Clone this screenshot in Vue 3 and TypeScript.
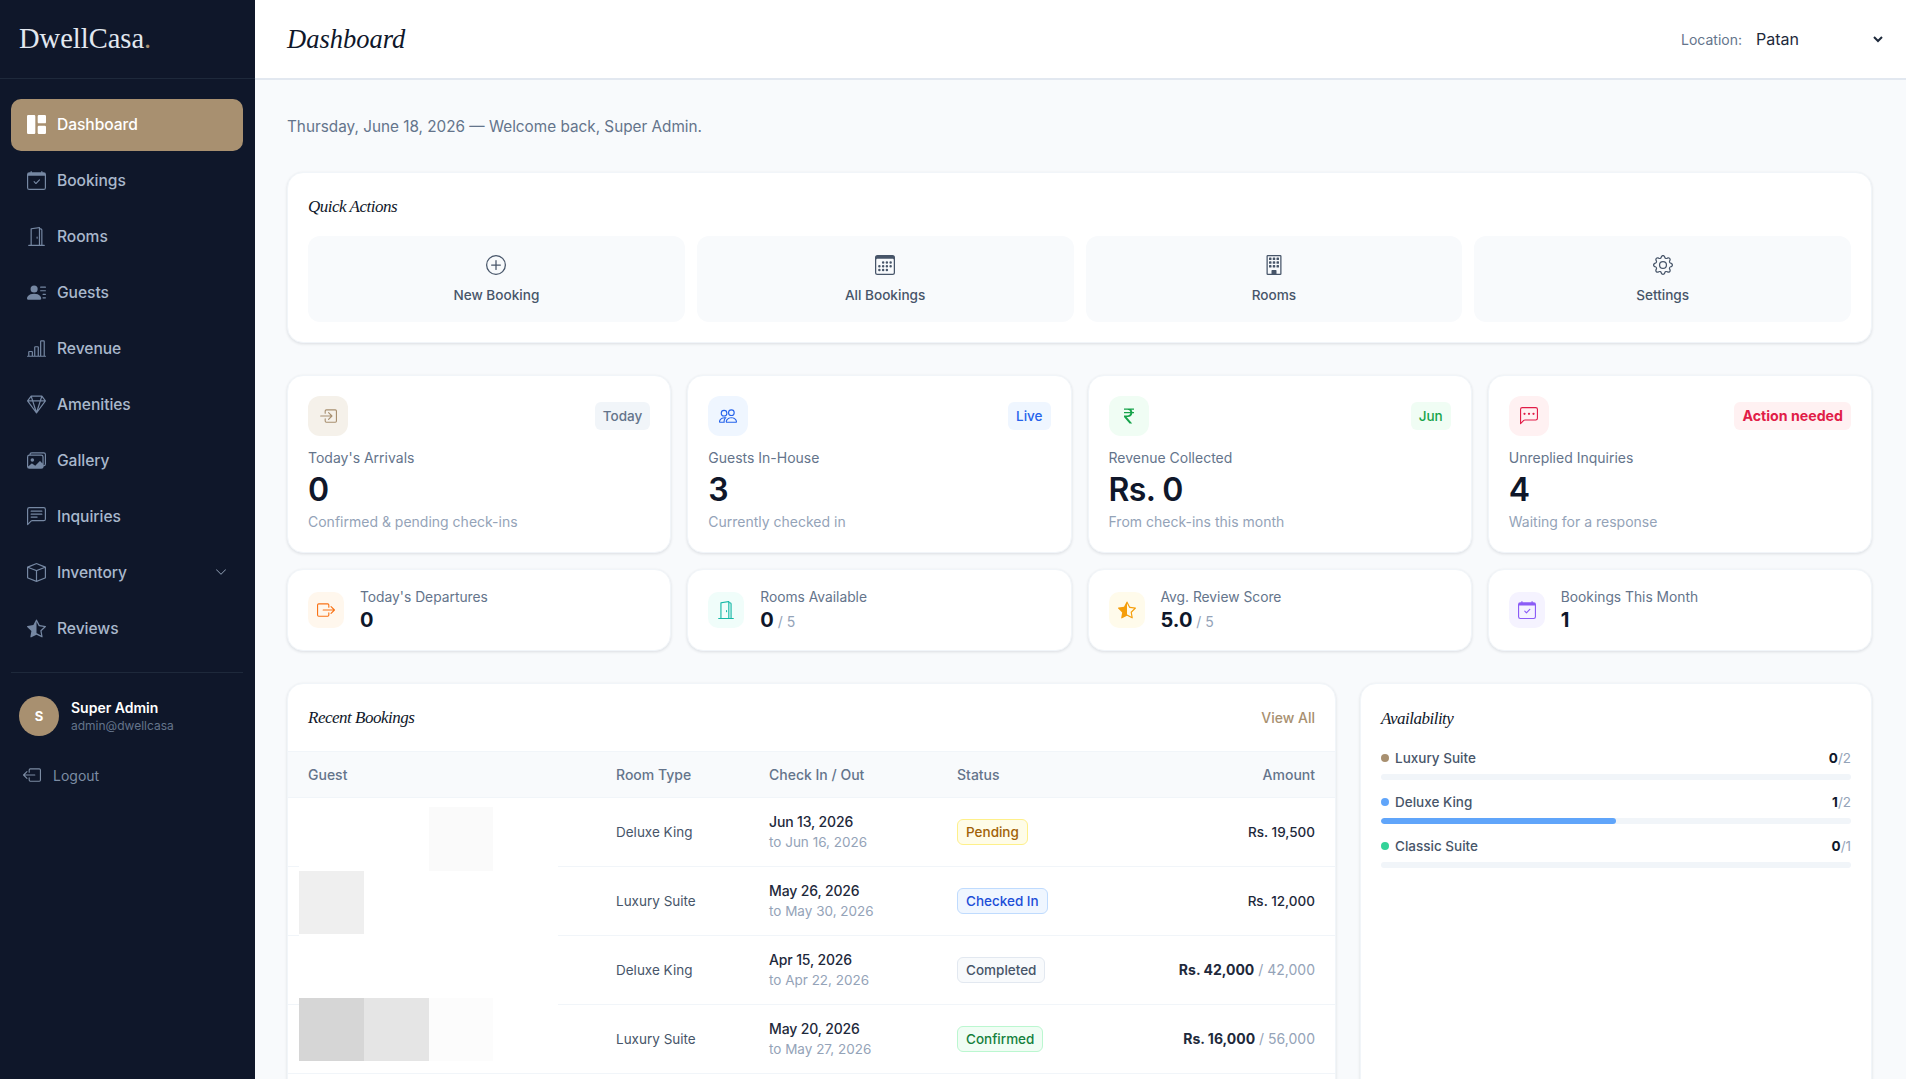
<template>
  <div class="layout">
    <aside class="sidebar">
      <div class="brand">DwellCasa<span class="brand-dot">.</span></div>
      <nav class="nav">
        <a v-for="item in navItems" :key="item.label" :class="['nav-item', { active: item.label === 'Dashboard' }]">
          <Icon :name="item.icon" class="nav-icon" />
          <span>{{ item.label }}</span>
          <Icon v-if="item.hasMenu" name="chevronDown" class="nav-caret" />
        </a>
      </nav>
      <div class="user-block">
        <div class="user">
          <div class="avatar">S</div>
          <div>
            <div class="user-name">Super Admin</div>
            <div class="user-mail">admin@dwellcasa</div>
          </div>
        </div>
        <a class="logout">
          <Icon name="boxArrowLeft" class="logout-icon" />
          <span>Logout</span>
        </a>
      </div>
    </aside>

    <div class="main">
      <header class="topbar">
        <h1 class="page-title">Dashboard</h1>
        <div class="location">
          <label class="location-label" for="location">Location:</label>
          <select id="location" class="location-select">
            <option>Patan</option>
          </select>
        </div>
      </header>

      <main class="content">
        <p class="welcome">Thursday, June 18, 2026 — Welcome back, Super Admin.</p>

        <section class="card quick">
          <h2 class="card-title">Quick Actions</h2>
          <div class="quick-grid">
            <a v-for="action in quickActions" :key="action.label" class="quick-btn">
              <Icon :name="action.icon" class="quick-icon" />
              <span>{{ action.label }}</span>
            </a>
          </div>
        </section>

        <section class="stat-grid">
          <div v-for="stat in mainStats" :key="stat.label" class="card stat">
            <div class="stat-top">
              <div :class="['stat-icon', `tone-${stat.tone}`]"><Icon :name="stat.icon" /></div>
              <span :class="['stat-badge', `tone-${stat.badgeTone}`]">{{ stat.badge }}</span>
            </div>
            <div class="stat-label">{{ stat.label }}</div>
            <div class="stat-value">{{ stat.value }}</div>
            <div class="stat-hint">{{ stat.hint }}</div>
          </div>
        </section>

        <section class="stat-grid mini-grid">
          <div v-for="stat in miniStats" :key="stat.label" class="card mini">
            <div :class="['mini-icon', `tone-${stat.tone}`]"><Icon :name="stat.icon" /></div>
            <div>
              <div class="mini-label">{{ stat.label }}</div>
              <div class="mini-value">{{ stat.value }}<small v-if="stat.total"> / {{ stat.total }}</small></div>
            </div>
          </div>
        </section>

        <section class="bottom">
          <div class="card bookings">
            <div class="bookings-head">
              <h2 class="card-title flat">Recent Bookings</h2>
              <a class="view-all">View All</a>
            </div>
            <div class="table-wrap">
              <table class="table">
                <thead>
                  <tr>
                    <th>Guest</th>
                    <th>Room Type</th>
                    <th>Check In / Out</th>
                    <th>Status</th>
                    <th class="right">Amount</th>
                  </tr>
                </thead>
                <tbody>
                  <tr v-for="row in bookings" :key="row.checkIn">
                    <td></td>
                    <td class="room">{{ row.room }}</td>
                    <td>
                      <div class="date-in">{{ row.checkIn }}</div>
                      <div class="date-out">to {{ row.checkOut }}</div>
                    </td>
                    <td><span :class="['status', `status-${row.status.toLowerCase().replace(' ', '-')}`]">{{ row.status }}</span></td>
                    <td class="right amount">
                      <span :class="{ strong: row.total }">{{ row.amount }}</span>
                      <span v-if="row.total" class="amount-total"> / {{ row.total }}</span>
                    </td>
                  </tr>
                  <!-- next row is below the fold -->
                  <tr><td colspan="5"></td></tr>
                </tbody>
              </table>
              <!-- pixelated block over the guest names -->
              <div class="mosaic">
                <span v-for="(shade, i) in mosaic" :key="i" class="mosaic-cell" :style="{ background: shade }"></span>
              </div>
            </div>
          </div>

          <div class="card availability">
            <h2 class="card-title">Availability</h2>
            <div v-for="room in availability" :key="room.name" class="avail-row">
              <div class="avail-line">
                <span class="avail-dot" :style="{ background: room.color }"></span>
                <span class="avail-name">{{ room.name }}</span>
                <span class="avail-count"><b>{{ room.free }}</b>/{{ room.total }}</span>
              </div>
              <div class="avail-track">
                <div class="avail-fill" :style="{ width: (room.free / room.total) * 100 + '%', background: room.color }"></div>
              </div>
            </div>
          </div>
        </section>
      </main>
    </div>
  </div>
</template>

<script setup lang="ts">
import { h } from 'vue';

const iconPaths: Record<string, string[]> = {
  grid: ['M0 1a1 1 0 0 1 1-1h5a1 1 0 0 1 1 1v14a1 1 0 0 1-1 1H1a1 1 0 0 1-1-1V1zm9 0a1 1 0 0 1 1-1h5a1 1 0 0 1 1 1v5a1 1 0 0 1-1 1h-5a1 1 0 0 1-1-1V1zm0 9a1 1 0 0 1 1-1h5a1 1 0 0 1 1 1v5a1 1 0 0 1-1 1h-5a1 1 0 0 1-1-1v-5z'],
  calendarCheck: [
    'M10.854 7.146a.5.5 0 0 1 0 .708l-3 3a.5.5 0 0 1-.708 0l-1.5-1.5a.5.5 0 1 1 .708-.708L7.5 9.793l2.646-2.647a.5.5 0 0 1 .708 0z',
    'M3.5 0a.5.5 0 0 1 .5.5V1h8V.5a.5.5 0 0 1 1 0V1h1a2 2 0 0 1 2 2v11a2 2 0 0 1-2 2H2a2 2 0 0 1-2-2V3a2 2 0 0 1 2-2h1V.5a.5.5 0 0 1 .5-.5zM1 4v10a1 1 0 0 0 1 1h12a1 1 0 0 0 1-1V4H1z'
  ],
  doorOpen: [
    'M8.5 10c-.276 0-.5-.448-.5-1s.224-1 .5-1 .5.448.5 1-.224 1-.5 1z',
    'M10.828.122A.5.5 0 0 1 11 .5V1h.5A1.5 1.5 0 0 1 13 2.5V15h1.5a.5.5 0 0 1 0 1h-13a.5.5 0 0 1 0-1H3V1.5a.5.5 0 0 1 .43-.495l7-1a.5.5 0 0 1 .398.117zM11.5 2H11v13h1V2.5a.5.5 0 0 0-.5-.5zM4 1.934V15h6V1.077l-6 .857z'
  ],
  personLines: ['M6 8a3 3 0 1 0 0-6 3 3 0 0 0 0 6zm-5 6s-1 0-1-1 1-4 6-4 6 3 6 4-1 1-1 1H1zM11 3.5a.5.5 0 0 1 .5-.5h4a.5.5 0 0 1 0 1h-4a.5.5 0 0 1-.5-.5zm.5 2.5a.5.5 0 0 0 0 1h4a.5.5 0 0 0 0-1h-4zm2 3a.5.5 0 0 0 0 1h2a.5.5 0 0 0 0-1h-2zm0 3a.5.5 0 0 0 0 1h2a.5.5 0 0 0 0-1h-2z'],
  barChart: ['M11 2a1 1 0 0 1 1-1h2a1 1 0 0 1 1 1v12h.5a.5.5 0 0 1 0 1H.5a.5.5 0 0 1 0-1H1v-3a1 1 0 0 1 1-1h2a1 1 0 0 1 1 1v3h1V7a1 1 0 0 1 1-1h2a1 1 0 0 1 1 1v7h1V2zm1 12h2V2h-2v12zm-3 0V7H7v7h2zm-5 0v-3H2v3h2z'],
  gem: ['M3.1.7a.5.5 0 0 1 .4-.2h9a.5.5 0 0 1 .4.2l2.976 3.974c.149.185.156.45.01.644L8.4 15.3a.5.5 0 0 1-.8 0L.1 5.3a.5.5 0 0 1 0-.6l3-4zm11.386 3.785-1.806-2.41-.776 2.413 2.582-.003zm-3.633.004.961-2.989H4.186l.963 2.995 5.704-.006zM5.47 5.495 8 13.366l2.532-7.876-5.062.005zm-1.371-.999-.78-2.422-1.818 2.425 2.598-.003zM1.499 5.5l5.113 6.817-2.192-6.82L1.5 5.5zm7.889 6.817 5.123-6.83-2.928.002-2.195 6.828z'],
  images: [
    'M4.502 9a1.5 1.5 0 1 0 0-3 1.5 1.5 0 0 0 0 3z',
    'M14.002 13a2 2 0 0 1-2 2h-10a2 2 0 0 1-2-2V5A2 2 0 0 1 2 3a2 2 0 0 1 2-2h10a2 2 0 0 1 2 2v8a2 2 0 0 1-1.998 2zM14 2H4a1 1 0 0 0-1 1h9.002a2 2 0 0 1 2 2v7A1 1 0 0 0 15 11V3a1 1 0 0 0-1-1zM2.002 4a1 1 0 0 0-1 1v8l2.646-2.354a.5.5 0 0 1 .63-.062l2.66 1.773 3.71-3.71a.5.5 0 0 1 .577-.094l1.777 1.947V5a1 1 0 0 0-1-1h-10z'
  ],
  chatText: [
    'M14 1a1 1 0 0 1 1 1v8a1 1 0 0 1-1 1H4.414A2 2 0 0 0 3 11.586l-2 2V2a1 1 0 0 1 1-1h12zM2 0a2 2 0 0 0-2 2v12.793a.5.5 0 0 0 .854.353l2.853-2.853A1 1 0 0 1 4.414 12H14a2 2 0 0 0 2-2V2a2 2 0 0 0-2-2H2z',
    'M3 3.5a.5.5 0 0 1 .5-.5h9a.5.5 0 0 1 0 1h-9a.5.5 0 0 1-.5-.5zM3 6a.5.5 0 0 1 .5-.5h9a.5.5 0 0 1 0 1h-9A.5.5 0 0 1 3 6zm0 2.5a.5.5 0 0 1 .5-.5h5a.5.5 0 0 1 0 1h-5a.5.5 0 0 1-.5-.5z'
  ],
  box: ['M8.186 1.113a.5.5 0 0 0-.372 0L1.846 3.5 8 5.961 14.154 3.5 8.186 1.113zM15 4.239l-6.5 2.6v7.922l6.5-2.6V4.24zM7.5 14.762V6.838L1 4.239v7.925l6.5 2.6zM7.443.184a1.5 1.5 0 0 1 1.114 0l7.129 2.852A.5.5 0 0 1 16 3.5v8.662a1 1 0 0 1-.629.928l-7.185 2.874a.5.5 0 0 1-.372 0L.63 13.09a1 1 0 0 1-.63-.928V3.5a.5.5 0 0 1 .314-.464L7.443.184z'],
  starHalf: ['M5.354 5.119 7.538.792A.516.516 0 0 1 8 .5c.183 0 .366.097.465.292l2.184 4.327 4.898.696A.537.537 0 0 1 16 6.32a.548.548 0 0 1-.17.445l-3.523 3.356.83 4.73c.078.443-.36.79-.746.592L8 13.187l-4.389 2.256a.52.52 0 0 1-.146.05c-.342.06-.668-.254-.6-.642l.83-4.73L.173 6.765a.55.55 0 0 1-.172-.403.58.58 0 0 1 .085-.302.513.513 0 0 1 .37-.245l4.898-.696zM8 12.027a.5.5 0 0 1 .232.056l3.686 1.894-.694-3.957a.565.565 0 0 1 .162-.505l2.907-2.77-4.052-.576a.525.525 0 0 1-.393-.288L8.001 2.223 8 2.226v9.8z'],
  chevronDown: ['M1.646 4.646a.5.5 0 0 1 .708 0L8 10.293l5.646-5.647a.5.5 0 0 1 .708.708l-6 6a.5.5 0 0 1-.708 0l-6-6a.5.5 0 0 1 0-.708z'],
  boxArrowLeft: [
    'M6 12.5a.5.5 0 0 0 .5.5h8a.5.5 0 0 0 .5-.5v-9a.5.5 0 0 0-.5-.5h-8a.5.5 0 0 0-.5.5v2a.5.5 0 0 1-1 0v-2A1.5 1.5 0 0 1 6.5 2h8A1.5 1.5 0 0 1 16 3.5v9a1.5 1.5 0 0 1-1.5 1.5h-8A1.5 1.5 0 0 1 5 12.5v-2a.5.5 0 0 1 1 0v2z',
    'M.146 8.354a.5.5 0 0 1 0-.708l3-3a.5.5 0 1 1 .708.708L1.707 7.5H10.5a.5.5 0 0 1 0 1H1.707l2.147 2.146a.5.5 0 0 1-.708.708l-3-3z'
  ],
  plusCircle: [
    'M8 15A7 7 0 1 1 8 1a7 7 0 0 1 0 14zm0 1A8 8 0 1 0 8 0a8 8 0 0 0 0 16z',
    'M8 4a.5.5 0 0 1 .5.5v3h3a.5.5 0 0 1 0 1h-3v3a.5.5 0 0 1-1 0v-3h-3a.5.5 0 0 1 0-1h3v-3A.5.5 0 0 1 8 4z'
  ],
  calendar3: [
    'M14 0H2a2 2 0 0 0-2 2v12a2 2 0 0 0 2 2h12a2 2 0 0 0 2-2V2a2 2 0 0 0-2-2zM1 3.857C1 3.384 1.448 3 2 3h12c.552 0 1 .384 1 .857v10.286c0 .473-.448.857-1 .857H2c-.552 0-1-.384-1-.857V3.857z',
    'M6.5 7a1 1 0 1 0 0-2 1 1 0 0 0 0 2zm3 0a1 1 0 1 0 0-2 1 1 0 0 0 0 2zm3 0a1 1 0 1 0 0-2 1 1 0 0 0 0 2zm-9 3a1 1 0 1 0 0-2 1 1 0 0 0 0 2zm3 0a1 1 0 1 0 0-2 1 1 0 0 0 0 2zm3 0a1 1 0 1 0 0-2 1 1 0 0 0 0 2zm3 0a1 1 0 1 0 0-2 1 1 0 0 0 0 2zm-9 3a1 1 0 1 0 0-2 1 1 0 0 0 0 2zm3 0a1 1 0 1 0 0-2 1 1 0 0 0 0 2zm3 0a1 1 0 1 0 0-2 1 1 0 0 0 0 2z'
  ],
  building: [
    'M4 2.5a.5.5 0 0 1 .5-.5h1a.5.5 0 0 1 .5.5v1a.5.5 0 0 1-.5.5h-1a.5.5 0 0 1-.5-.5v-1Zm3 0a.5.5 0 0 1 .5-.5h1a.5.5 0 0 1 .5.5v1a.5.5 0 0 1-.5.5h-1a.5.5 0 0 1-.5-.5v-1Zm3.5-.5a.5.5 0 0 0-.5.5v1a.5.5 0 0 0 .5.5h1a.5.5 0 0 0 .5-.5v-1a.5.5 0 0 0-.5-.5h-1ZM4 5.5a.5.5 0 0 1 .5-.5h1a.5.5 0 0 1 .5.5v1a.5.5 0 0 1-.5.5h-1a.5.5 0 0 1-.5-.5v-1ZM7.5 5a.5.5 0 0 0-.5.5v1a.5.5 0 0 0 .5.5h1a.5.5 0 0 0 .5-.5v-1a.5.5 0 0 0-.5-.5h-1Zm2.5.5a.5.5 0 0 1 .5-.5h1a.5.5 0 0 1 .5.5v1a.5.5 0 0 1-.5.5h-1a.5.5 0 0 1-.5-.5v-1ZM4.5 8a.5.5 0 0 0-.5.5v1a.5.5 0 0 0 .5.5h1a.5.5 0 0 0 .5-.5v-1a.5.5 0 0 0-.5-.5h-1Zm2.5.5a.5.5 0 0 1 .5-.5h1a.5.5 0 0 1 .5.5v1a.5.5 0 0 1-.5.5h-1a.5.5 0 0 1-.5-.5v-1Zm3.5-.5a.5.5 0 0 0-.5.5v1a.5.5 0 0 0 .5.5h1a.5.5 0 0 0 .5-.5v-1a.5.5 0 0 0-.5-.5h-1Z',
    'M2 1a1 1 0 0 1 1-1h10a1 1 0 0 1 1 1v14a1 1 0 0 1-1 1H3a1 1 0 0 1-1-1V1Zm11 0H3v14h3v-2.5a.5.5 0 0 1 .5-.5h3a.5.5 0 0 1 .5.5V15h3V1Z'
  ],
  gear: [
    'M8 4.754a3.246 3.246 0 1 0 0 6.492 3.246 3.246 0 0 0 0-6.492zM5.754 8a2.246 2.246 0 1 1 4.492 0 2.246 2.246 0 0 1-4.492 0z',
    'M9.796 1.343c-.527-1.79-3.065-1.79-3.592 0l-.094.319a.873.873 0 0 1-1.255.52l-.292-.16c-1.64-.892-3.433.902-2.54 2.541l.159.292a.873.873 0 0 1-.52 1.255l-.319.094c-1.79.527-1.79 3.065 0 3.592l.319.094a.873.873 0 0 1 .52 1.255l-.16.292c-.892 1.64.901 3.434 2.541 2.54l.292-.159a.873.873 0 0 1 1.255.52l.094.319c.527 1.79 3.065 1.79 3.592 0l.094-.319a.873.873 0 0 1 1.255-.52l.292.16c1.64.893 3.434-.902 2.54-2.541l-.159-.292a.873.873 0 0 1 .52-1.255l.319-.094c1.79-.527 1.79-3.065 0-3.592l-.319-.094a.873.873 0 0 1-.52-1.255l.16-.292c.893-1.64-.902-3.433-2.541-2.54l-.292.159a.873.873 0 0 1-1.255-.52l-.094-.319zm-2.633.283c.246-.835 1.428-.835 1.674 0l.094.319a1.873 1.873 0 0 0 2.693 1.115l.291-.16c.764-.415 1.6.42 1.184 1.185l-.159.292a1.873 1.873 0 0 0 1.116 2.692l.318.094c.835.246.835 1.428 0 1.674l-.319.094a1.873 1.873 0 0 0-1.115 2.693l.16.291c.415.764-.42 1.6-1.185 1.184l-.291-.159a1.873 1.873 0 0 0-2.693 1.116l-.094.318c-.246.835-1.428.835-1.674 0l-.094-.319a1.873 1.873 0 0 0-2.692-1.115l-.292.16c-.764.415-1.6-.42-1.184-1.185l.159-.291A1.873 1.873 0 0 0 1.945 8.93l-.319-.094c-.835-.246-.835-1.428 0-1.674l.319-.094A1.873 1.873 0 0 0 3.06 4.377l-.16-.292c-.415-.764.42-1.6 1.185-1.184l.292.159a1.873 1.873 0 0 0 2.692-1.115l.094-.319z'
  ],
  boxArrowIn: [
    'M6 3.5a.5.5 0 0 1 .5-.5h8a.5.5 0 0 1 .5.5v9a.5.5 0 0 1-.5.5h-8a.5.5 0 0 1-.5-.5v-2a.5.5 0 0 0-1 0v2A1.5 1.5 0 0 0 6.5 14h8a1.5 1.5 0 0 0 1.5-1.5v-9A1.5 1.5 0 0 0 14.5 2h-8A1.5 1.5 0 0 0 5 3.5v2a.5.5 0 0 0 1 0v-2z',
    'M11.854 8.354a.5.5 0 0 0 0-.708l-3-3a.5.5 0 1 0-.708.708L10.293 7.5H1.5a.5.5 0 0 0 0 1h8.793l-2.147 2.146a.5.5 0 0 0 .708.708l3-3z'
  ],
  boxArrowRight: [
    'M10 12.5a.5.5 0 0 1-.5.5h-8a.5.5 0 0 1-.5-.5v-9a.5.5 0 0 1 .5-.5h8a.5.5 0 0 1 .5.5v2a.5.5 0 0 0 1 0v-2A1.5 1.5 0 0 0 9.5 2h-8A1.5 1.5 0 0 0 0 3.5v9A1.5 1.5 0 0 0 1.5 14h8a1.5 1.5 0 0 0 1.5-1.5v-2a.5.5 0 0 0-1 0v2z',
    'M15.854 8.354a.5.5 0 0 0 0-.708l-3-3a.5.5 0 0 0-.708.708L14.293 7.5H5.5a.5.5 0 0 0 0 1h8.793l-2.147 2.146a.5.5 0 0 0 .708.708l3-3z'
  ],
  people: ['M15 14s1 0 1-1-1-4-5-4-5 3-5 4 1 1 1 1h8Zm-7.978-1A.261.261 0 0 1 7 12.996c.001-.264.167-1.03.76-1.72C8.312 10.629 9.282 10 11 10c1.717 0 2.687.63 3.24 1.276.593.69.758 1.457.76 1.72l-.008.002a.274.274 0 0 1-.014.002H7.022ZM11 7a2 2 0 1 0 0-4 2 2 0 0 0 0 4Zm3-2a3 3 0 1 1-6 0 3 3 0 0 1 6 0ZM6.936 9.28a5.88 5.88 0 0 0-1.23-.247A7.35 7.35 0 0 0 5 9c-4 0-5 3-5 4 0 .667.333 1 1 1h4.216A2.238 2.238 0 0 1 5 13c0-1.01.377-2.042 1.09-2.904.243-.294.526-.569.846-.816ZM4.92 10A5.493 5.493 0 0 0 4 13H1c0-.26.164-1.03.76-1.724.545-.636 1.492-1.256 3.16-1.275ZM1.5 5.5a3 3 0 1 1 6 0 3 3 0 0 1-6 0Zm3-2a2 2 0 1 0 0 4 2 2 0 0 0 0-4Z'],
  rupee: ['M4 3.06h2.726c1.22 0 2.12.575 2.325 1.724H4v1.051h5.051C8.855 7.001 8 7.558 6.788 7.558H4v1.317L8.437 14h2.11L6.095 8.884h.855c2.316-.018 3.465-1.476 3.688-3.049H12V4.784h-1.345c-.08-.778-.357-1.335-.793-1.732H12V2H4v1.06Z'],
  chatDots: [
    'M14 1a1 1 0 0 1 1 1v8a1 1 0 0 1-1 1H4.414A2 2 0 0 0 3 11.586l-2 2V2a1 1 0 0 1 1-1h12zM2 0a2 2 0 0 0-2 2v12.793a.5.5 0 0 0 .854.353l2.853-2.853A1 1 0 0 1 4.414 12H14a2 2 0 0 0 2-2V2a2 2 0 0 0-2-2H2z',
    'M5 6a1 1 0 1 1-2 0 1 1 0 0 1 2 0zm4 0a1 1 0 1 1-2 0 1 1 0 0 1 2 0zm4 0a1 1 0 1 1-2 0 1 1 0 0 1 2 0z'
  ]
};

const Icon = (props: { name: string }) =>
  h('svg', { viewBox: '0 0 16 16', fill: 'currentColor', width: 16, height: 16 },
    iconPaths[props.name].map(d => h('path', { d })));
Icon.props = ['name'];

interface Booking {
  room: string;
  checkIn: string;
  checkOut: string;
  status: string;
  amount: string;
  total?: string;
}

const navItems = [
  { label: 'Dashboard', icon: 'grid' },
  { label: 'Bookings', icon: 'calendarCheck' },
  { label: 'Rooms', icon: 'doorOpen' },
  { label: 'Guests', icon: 'personLines' },
  { label: 'Revenue', icon: 'barChart' },
  { label: 'Amenities', icon: 'gem' },
  { label: 'Gallery', icon: 'images' },
  { label: 'Inquiries', icon: 'chatText' },
  { label: 'Inventory', icon: 'box', hasMenu: true },
  { label: 'Reviews', icon: 'starHalf' }
];

const quickActions = [
  { label: 'New Booking', icon: 'plusCircle' },
  { label: 'All Bookings', icon: 'calendar3' },
  { label: 'Rooms', icon: 'building' },
  { label: 'Settings', icon: 'gear' }
];

const mainStats = [
  { label: "Today's Arrivals", value: '0', hint: 'Confirmed & pending check-ins', icon: 'boxArrowIn', tone: 'gold', badge: 'Today', badgeTone: 'slate' },
  { label: 'Guests In-House', value: '3', hint: 'Currently checked in', icon: 'people', tone: 'blue', badge: 'Live', badgeTone: 'blue' },
  { label: 'Revenue Collected', value: 'Rs. 0', hint: 'From check-ins this month', icon: 'rupee', tone: 'green', badge: 'Jun', badgeTone: 'green' },
  { label: 'Unreplied Inquiries', value: '4', hint: 'Waiting for a response', icon: 'chatDots', tone: 'rose', badge: 'Action needed', badgeTone: 'alert' }
];

const miniStats = [
  { label: "Today's Departures", value: '0', icon: 'boxArrowRight', tone: 'orange' },
  { label: 'Rooms Available', value: '0', total: '5', icon: 'doorOpen', tone: 'teal' },
  { label: 'Avg. Review Score', value: '5.0', total: '5', icon: 'starHalf', tone: 'amber' },
  { label: 'Bookings This Month', value: '1', icon: 'calendarCheck', tone: 'violet' }
];

const bookings: Booking[] = [
  { room: 'Deluxe King', checkIn: 'Jun 13, 2026', checkOut: 'Jun 16, 2026', status: 'Pending', amount: 'Rs. 19,500' },
  { room: 'Luxury Suite', checkIn: 'May 26, 2026', checkOut: 'May 30, 2026', status: 'Checked In', amount: 'Rs. 12,000' },
  { room: 'Deluxe King', checkIn: 'Apr 15, 2026', checkOut: 'Apr 22, 2026', status: 'Completed', amount: 'Rs. 42,000', total: '42,000' },
  { room: 'Luxury Suite', checkIn: 'May 20, 2026', checkOut: 'May 27, 2026', status: 'Confirmed', amount: 'Rs. 16,000', total: '56,000' }
];

const mosaic = [
  '#fff', '#fff', '#fafafa', '#fff',
  '#efefef', '#fff', '#fff', '#fff',
  '#fff', '#fff', '#fff', '#fff',
  '#d6d6d6', '#e5e5e5', '#fcfcfc', '#fff'
];

const availability = [
  { name: 'Luxury Suite', free: 0, total: 2, color: '#a89070' },
  { name: 'Deluxe King', free: 1, total: 2, color: '#60a5fa' },
  { name: 'Classic Suite', free: 0, total: 1, color: '#34d399' }
];
</script>

<style>
html, body {
  margin: 0;
  background: #f8fafc;
}
</style>

<style scoped>
.layout {
  display: flex;
  height: 100vh;
  overflow: hidden;
  font-family: Inter, "Noto Sans", sans-serif;
  color: #0f172a;
}

/* sidebar */
.sidebar {
  flex: 0 0 255px;
  background: #0f172a;
  display: flex;
  flex-direction: column;
}
.brand {
  height: 79px;
  box-sizing: border-box;
  padding-left: 19px;
  line-height: 78px;
  border-bottom: 1px solid #1e293b;
  font-family: "Liberation Serif", serif;
  font-size: 28.5px;
  color: #e2e8f0;
}
.brand-dot { color: #a89070; }
.nav {
  display: flex;
  flex-direction: column;
  gap: 4px;
  padding: 20px 12px 17px 11px;
}
.nav-item {
  box-sizing: border-box;
  display: flex;
  align-items: center;
  gap: 11px;
  height: 52px;
  padding: 0 16px 2px;
  border-radius: 10px;
  font-size: 15.6px;
  font-weight: 500;
  letter-spacing: -0.05px;
  color: #a9b8cc;
}
.nav-item.active {
  background: #a89070;
  color: #fff;
}
.nav-icon {
  width: 19px;
  height: 19px;
  color: #7688a3;
}
.active .nav-icon { color: #fff; }
.nav-caret {
  width: 12px;
  height: 12px;
  margin-left: auto;
  color: #94a3b8;
}
.user-block {
  margin: 0 12px 0 11px;
  border-top: 1px solid #1e293b;
  padding: 23px 8px 0;
}
.user {
  display: flex;
  align-items: center;
  gap: 12px;
}
.avatar {
  width: 40px;
  height: 40px;
  border-radius: 50%;
  background: #a89070;
  color: #fff;
  font-size: 13px;
  font-weight: 700;
  display: flex;
  align-items: center;
  justify-content: center;
}
.user-name {
  font-size: 14px;
  font-weight: 600;
  line-height: 20px;
  color: #fff;
}
.user-mail {
  font-size: 12px;
  line-height: 16px;
  color: #64748b;
}
.logout {
  display: flex;
  align-items: center;
  gap: 12px;
  margin-top: 30px;
  padding-left: 4px;
  font-size: 14px;
  color: #7c8ca3;
}
.logout-icon {
  width: 18px;
  height: 18px;
}

/* topbar */
.main {
  flex: 1;
  min-width: 0;
  display: flex;
  flex-direction: column;
}
.topbar {
  flex: 0 0 80px;
  box-sizing: border-box;
  display: flex;
  align-items: center;
  justify-content: space-between;
  padding: 0 20px 0 32px;
  background: #fff;
  border-bottom: 2px solid #e2e8f0;
}
.page-title {
  margin: 0;
  font-family: "Liberation Serif", serif;
  font-style: italic;
  font-weight: 400;
  font-size: 26.5px;
  color: #0f172a;
}
.location {
  display: flex;
  align-items: center;
  gap: 6px;
}
.location-label {
  font-size: 14px;
  color: #64748b;
}
.location-select {
  width: 138px;
  padding: 4px 0 4px 4px;
  border: none;
  background: #fff;
  font-family: inherit;
  font-size: 16px;
  color: #1e293b;
}

/* content */
.content {
  flex: 1;
  padding: 32px 34px 32px 32px;
  overflow: hidden;
}
.welcome {
  margin: 0 0 30px;
  font-size: 15.3px;
  line-height: 30px;
  color: #64748b;
}
.card {
  box-sizing: border-box;
  background: #fff;
  border: 1px solid #f1f5f9;
  border-radius: 16px;
  box-shadow: 0 1px 3px rgba(15, 23, 42, 0.12);
}
.card-title {
  margin: 0 0 16px;
  font-family: "Liberation Serif", serif;
  font-style: italic;
  font-weight: 400;
  font-size: 17px;
  line-height: 27px;
  letter-spacing: -0.5px;
  color: #0f172a;
}
.card-title.flat { margin: 0; }
.quick {
  padding: 20px;
  margin-bottom: 32px;
}
.quick-grid {
  display: grid;
  grid-template-columns: repeat(4, 1fr);
  gap: 12px;
}
.quick-btn {
  height: 86px;
  display: flex;
  flex-direction: column;
  align-items: center;
  justify-content: center;
  gap: 12px;
  background: #f8fafc;
  border-radius: 12px;
  font-size: 13.6px;
  font-weight: 500;
  color: #475569;
}
.quick-icon {
  width: 20px;
  height: 20px;
}

/* stats */
.stat-grid {
  display: grid;
  grid-template-columns: repeat(4, 1fr);
  gap: 16px;
}
.stat { padding: 20px; }
.stat-top {
  display: flex;
  align-items: center;
  justify-content: space-between;
  margin-bottom: 12px;
}
.stat-icon {
  width: 40px;
  height: 40px;
  border-radius: 12px;
  display: flex;
  align-items: center;
  justify-content: center;
}
.stat-icon svg {
  width: 18px;
  height: 18px;
}
.stat-icon.tone-green svg {
  width: 20px;
  height: 20px;
}
.stat-badge {
  height: 28px;
  padding: 0 8px;
  border-radius: 6px;
  font-size: 13.5px;
  font-weight: 500;
  line-height: 28px;
}
.stat-label {
  font-size: 14px;
  line-height: 20px;
  color: #64748b;
}
.stat-value {
  font-size: 32px;
  font-weight: 600;
  line-height: 44px;
  letter-spacing: -0.6px;
  color: #0f172a;
}
.stat-hint {
  font-size: 14px;
  line-height: 20px;
  color: #94a3b8;
}
.tone-gold { background: #f5f1ea; color: #a89070; }
.tone-blue { background: #eff6ff; color: #2563eb; }
.tone-green { background: #f0fdf4; color: #16a34a; }
.tone-rose { background: #fff1f2; color: #e11d48; }
.tone-slate { background: #f1f5f9; color: #64748b; }
.tone-alert { background: #fff1f2; color: #e11d48; font-size: 14.2px; font-weight: 700; }
.tone-orange { background: #fff7ed; color: #f97316; }
.tone-teal { background: #f0fdfa; color: #14b8a6; }
.tone-amber { background: #fffbeb; color: #f59e0b; }
.tone-violet { background: #f5f3ff; color: #8b5cf6; }
.mini-grid {
  margin-top: 16px;
  margin-bottom: 32px;
}
.mini {
  display: flex;
  align-items: center;
  gap: 16px;
  padding: 17px 20px;
}
.mini-icon {
  width: 36px;
  height: 36px;
  border-radius: 10px;
  display: flex;
  align-items: center;
  justify-content: center;
}
.mini-icon svg {
  width: 18px;
  height: 18px;
}
.mini-label {
  font-size: 13.8px;
  line-height: 20px;
  color: #64748b;
}
.mini-value {
  font-size: 20px;
  font-weight: 700;
  line-height: 26px;
  color: #0f172a;
}
.mini-value small {
  font-size: 14px;
  font-weight: 400;
  line-height: 1;
  color: #94a3b8;
}

/* bottom row */
.bottom {
  display: grid;
  grid-template-columns: 1049px 1fr;
  gap: 24px;
}
.bookings-head {
  display: flex;
  align-items: center;
  justify-content: space-between;
  padding: 20px;
  border-bottom: 1px solid #f1f5f9;
}
.view-all {
  font-size: 14px;
  font-weight: 500;
  color: #a89070;
}
.table-wrap { position: relative; }
.table {
  width: 100%;
  table-layout: fixed;
  border-collapse: collapse;
  font-size: 14px;
}
.table th {
  box-sizing: border-box;
  height: 45px;
  padding: 0 20px;
  background: #f8fafc;
  border-bottom: 1px solid #f1f5f9;
  font-weight: 500;
  text-align: left;
  color: #64748b;
}
.table td {
  height: 68px;
  padding: 0 20px;
  border-bottom: 1px solid #f1f5f9;
}
.table th:nth-child(1) { width: 308px; }
.table th:nth-child(2) { width: 153px; }
.table th:nth-child(3) { width: 188px; }
.table th:nth-child(4) { width: 190px; }
.table .right { text-align: right; }
.room {
  font-size: 13.5px;
  color: #475569;
}
.date-in {
  line-height: 20px;
  letter-spacing: -0.15px;
  color: #1e293b;
  font-weight: 500;
}
.date-out {
  font-size: 13.5px;
  line-height: 20px;
  color: #94a3b8;
}
.status {
  display: inline-block;
  padding: 0 8px;
  border: 1px solid;
  border-radius: 6px;
  font-size: 13.5px;
  font-weight: 500;
  line-height: 24px;
}
.status-pending { background: #fefce8; border-color: #fef08a; color: #a16207; }
.status-checked-in { background: #eff6ff; border-color: #bfdbfe; color: #1d4ed8; }
.status-completed { background: #f8fafc; border-color: #e2e8f0; color: #475569; }
.status-confirmed { background: #f0fdf4; border-color: #bbf7d0; color: #15803d; }
.amount {
  font-size: 13.5px;
  font-weight: 500;
  color: #1e293b;
}
.strong {
  font-size: 14px;
  font-weight: 700;
}
.amount-total {
  font-size: 14px;
  font-weight: 400;
  color: #94a3b8;
}
.mosaic {
  position: absolute;
  top: 55px;
  left: 11px;
  width: 259px;
  display: grid;
  grid-template-columns: repeat(4, 1fr);
  grid-auto-rows: 63.5px;
}

/* availability */
.availability { padding: 21px 20px 20px; }
.avail-row { margin-bottom: 12px; }
.avail-line {
  display: flex;
  align-items: center;
  margin-bottom: 6px;
  font-size: 13.5px;
  line-height: 20px;
}
.avail-dot {
  width: 8px;
  height: 8px;
  margin-right: 6px;
  border-radius: 50%;
}
.avail-name { color: #475569; font-weight: 500; }
.avail-count {
  margin-left: auto;
  color: #94a3b8;
}
.avail-count b {
  font-weight: 700;
  color: #0f172a;
}
.avail-track {
  height: 6px;
  border-radius: 3px;
  background: #f1f5f9;
  overflow: hidden;
}
.avail-fill {
  height: 100%;
  border-radius: 3px;
}
</style>
